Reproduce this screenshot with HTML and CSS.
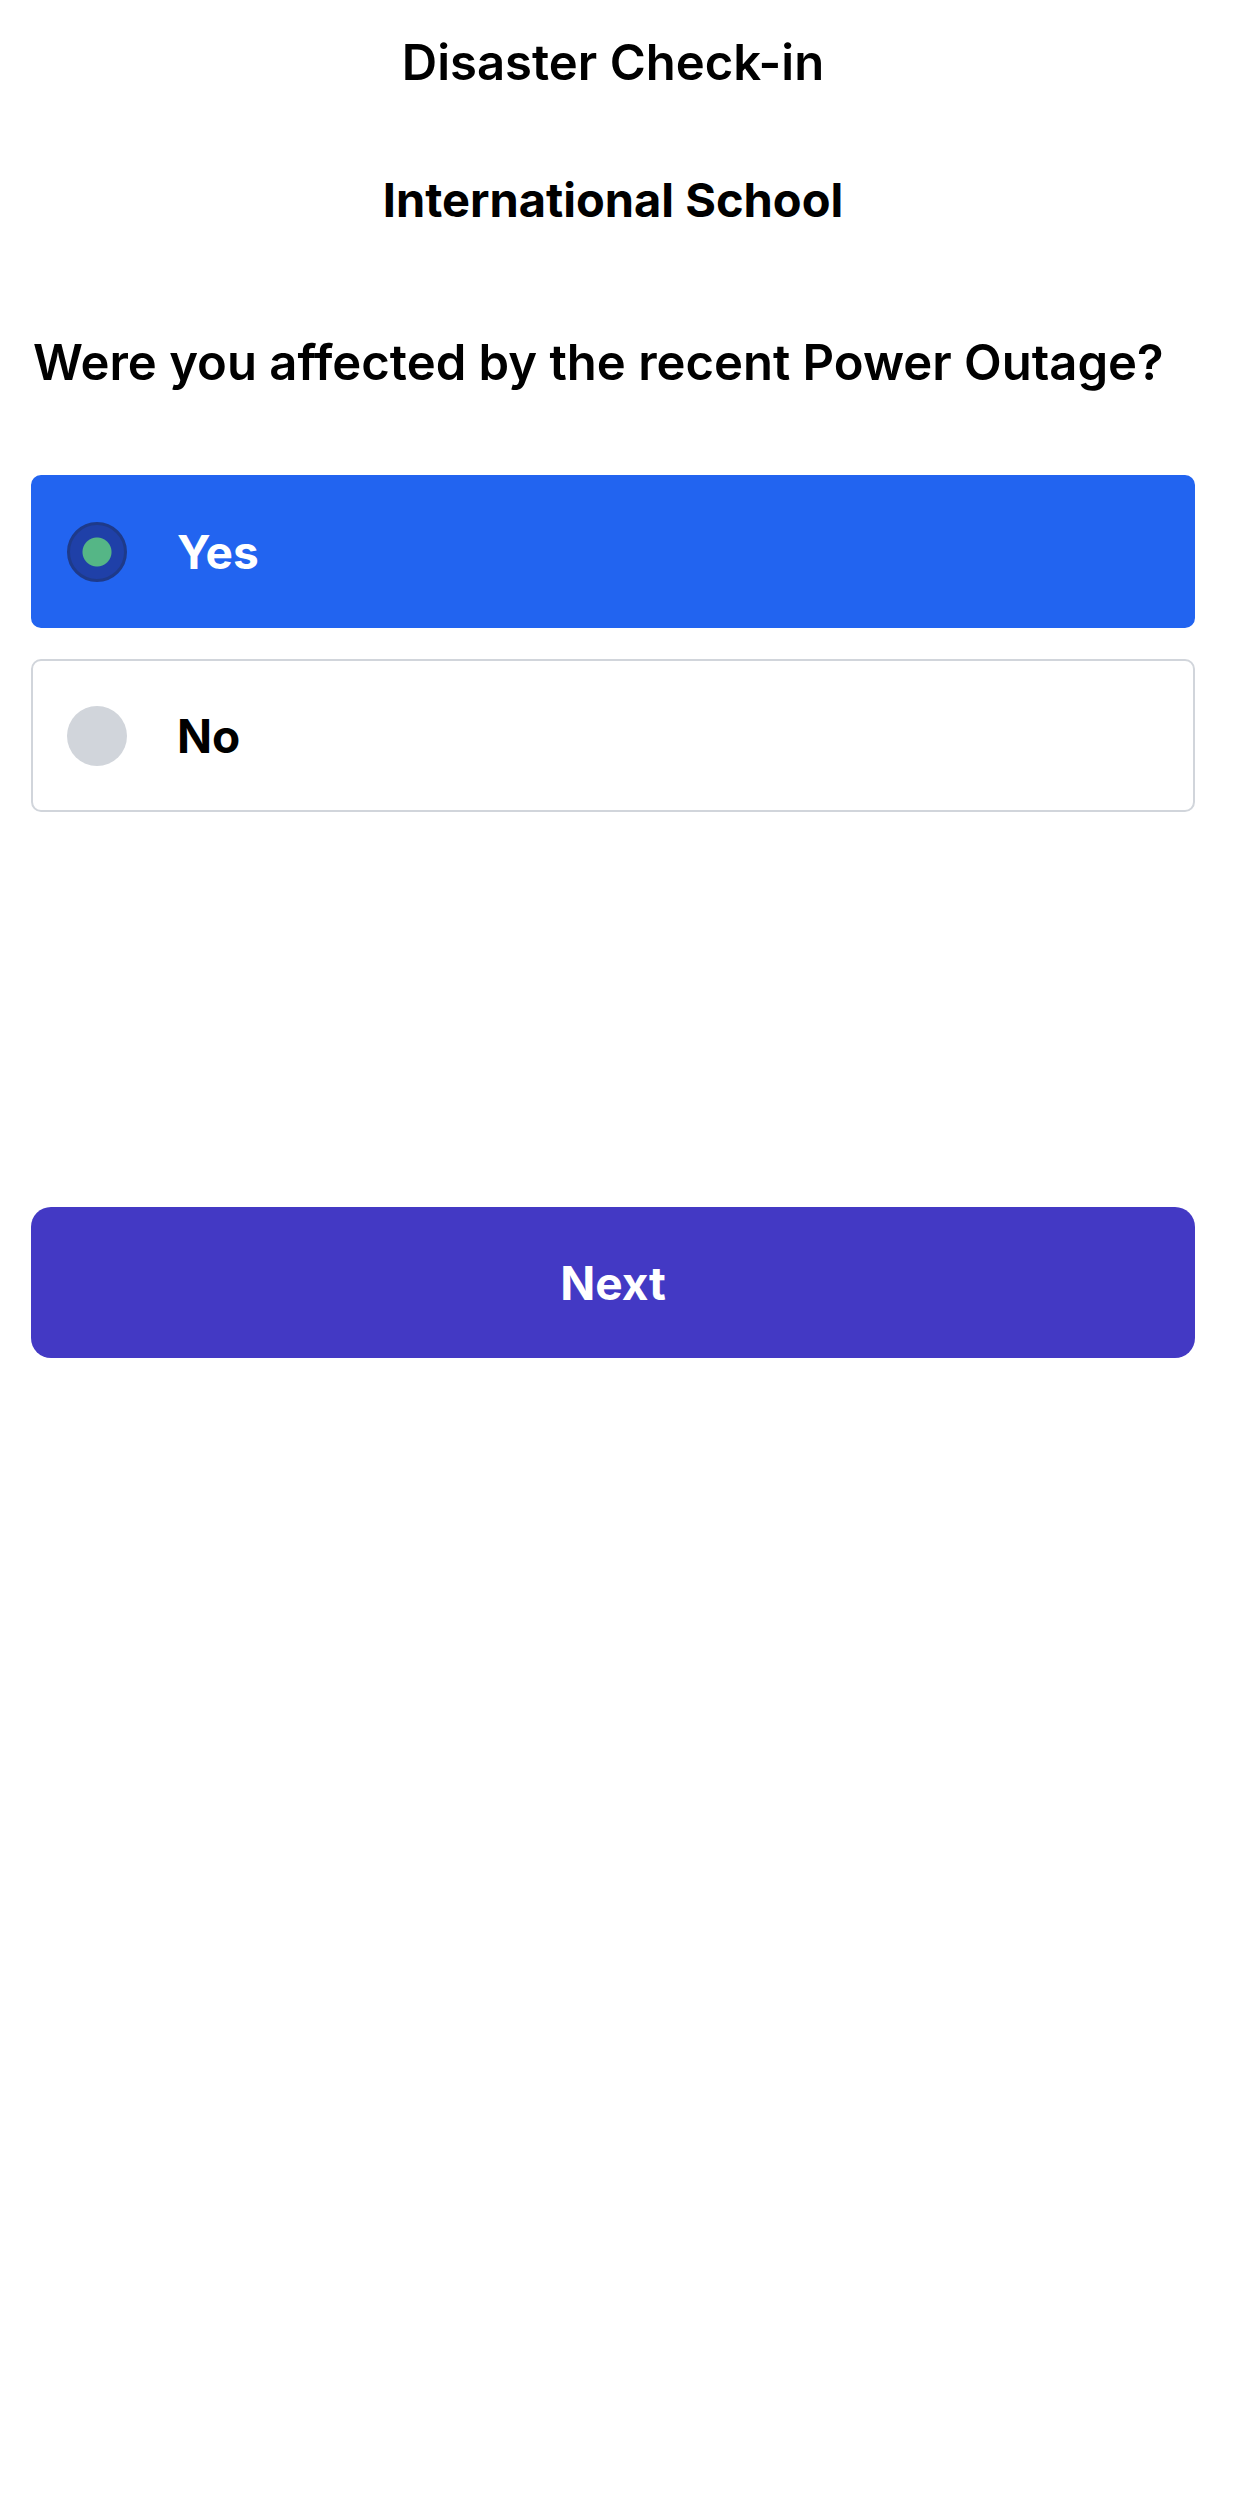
FILE: index.html
```html
<!DOCTYPE html>
<html lang="en">
<head>
  <meta charset="UTF-8">
  <title>Disaster Check-in</title>
  <link rel="stylesheet" href="styles.css">
</head>
<body>

  <div class="page">
    <h1 class="title">Disaster Check-in</h1>
    <h2 class="school">International School</h2>

    <p class="question">Were you affected by the recent Power Outage?</p>

    <div class="options">
      <label class="option selected">
        <input type="radio" name="affected" value="yes" checked>
        <span>Yes</span>
      </label>
      <label class="option">
        <input type="radio" name="affected" value="no">
        <span>No</span>
      </label>
    </div>

    <button class="next-btn">Next</button>
  </div>

</body>
</html>
```

FILE: styles.css
```css
body {
  margin: 0;
  font-family: Inter, "Liberation Sans", Arial, sans-serif;
  background-color: #fff;
  color: #000;
}

.page {
  padding: 33px 46px 0 31px;
}

.title {
  margin: 0;
  font-size: 49px;
  font-weight: 600;
  line-height: 60px;
  text-align: center;
}

.school {
  margin: 77px 0 0;
  font-size: 47px;
  font-weight: 700;
  line-height: 60px;
  text-align: center;
}

.question {
  margin: 103px 0 0 2px;
  font-size: 49px;
  font-weight: 600;
  line-height: 60px;
}

.options {
  margin-top: 82px;
  display: flex;
  flex-direction: column;
  gap: 31px;
}

.option {
  display: flex;
  align-items: center;
  gap: 50px;
  height: 153px;
  box-sizing: border-box;
  padding-left: 34px;
  border: 2px solid #d1d5db;
  border-radius: 10px;
  font-size: 46px;
  font-weight: 700;
  background-color: #fff;
}

.option.selected {
  background-color: #2264f0;
  border-color: #2264f0;
  color: #fff;
}

.option input {
  appearance: none;
  margin: 0;
  width: 60px;
  height: 60px;
  border-radius: 50%;
  background-color: #d1d5db;
  flex-shrink: 0;
}

.option input:checked {
  background-color: #1f40a8;
  border: 3px solid #1e3a8a;
  box-sizing: border-box;
  background-image: radial-gradient(circle, #55b686 0 14px, transparent 15px);
}

.next-btn {
  display: block;
  width: 100%;
  height: 151px;
  margin-top: 395px;
  border: none;
  border-radius: 20px;
  background-color: #4339c4;
  color: #fff;
  font-family: inherit;
  font-size: 46px;
  font-weight: 700;
}
```
